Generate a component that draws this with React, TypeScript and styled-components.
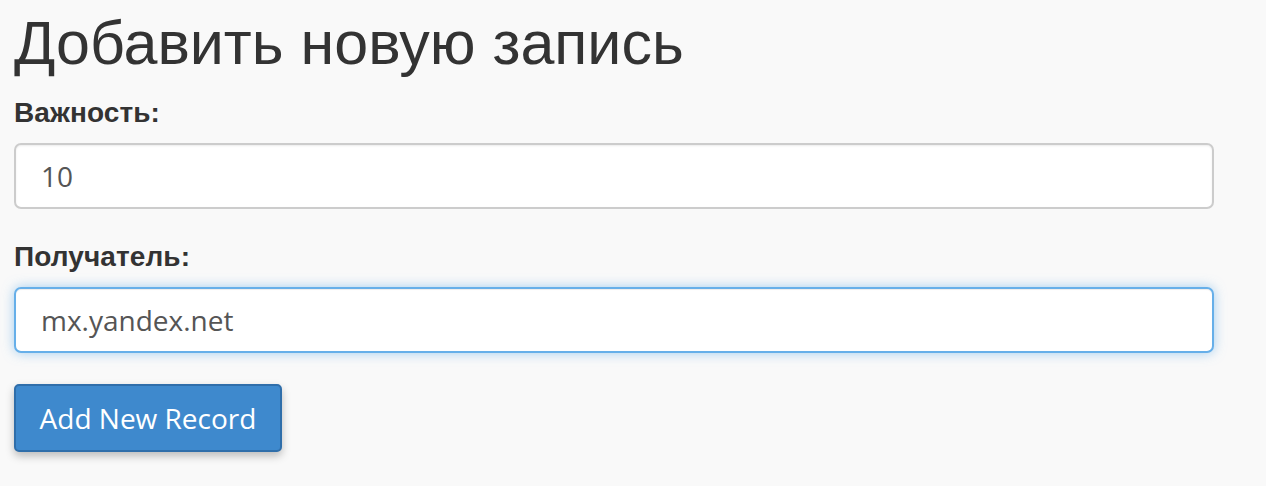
import React from "react";
import styled, { createGlobalStyle } from "styled-components";

const Global = createGlobalStyle`
  html, body { margin: 0; padding: 0; background: #f9f9f9; }
  body { font-family: "Open Sans", "Liberation Sans", sans-serif; color: #333; min-height: 486px; }
`;

const Page = styled.div`
  padding: 3px 52px 30px 14px;
  display: flex;
  flex-direction: column;
`;

const Title = styled.h1`
  margin: 0 0 15px 0;
  font-family: "Liberation Sans", Arial, sans-serif;
  font-weight: 400;
  font-size: 61px;
  line-height: 80px;
  color: #333;
`;

const Group = styled.div`
  display: flex;
  flex-direction: column;
  margin-bottom: 33px;
`;

const Label = styled.label`
  font-family: "Liberation Sans", Arial, sans-serif;
  font-weight: 700;
  font-size: 28px;
  line-height: 30px;
  letter-spacing: 0.1px;
  color: #333;
  margin: 0 0 15px 0;
`;

const Input = styled.input<{ $focused?: boolean }>`
  box-sizing: border-box;
  width: 100%;
  height: 66px;
  padding: 0 25px;
  font-family: "Open Sans", sans-serif;
  font-size: 28px;
  color: #555;
  background: #fff;
  border: 2px solid ${(p) => (p.$focused ? "#66afe9" : "#cccccc")};
  border-radius: 7px;
  outline: none;
  box-shadow: ${(p) =>
    p.$focused
      ? "inset 0 1px 1px rgba(0,0,0,.075), 0 0 12px rgba(102,175,233,.6)"
      : "inset 0 1px 2px rgba(0,0,0,.075)"};
`;

const Button = styled.button`
  align-self: flex-start;
  box-sizing: border-box;
  width: 268px;
  height: 68px;
  margin-top: -2px;
  font-family: "Open Sans", sans-serif;
  font-size: 28px;
  color: #fff;
  background: #3e89cd;
  border: 2px solid #2f6eaa;
  border-radius: 5px;
  box-shadow: 0 4px 9px rgba(0,0,0,.25);
  cursor: pointer;
`;

export default function App() {
  return (
    <>
      <Global />
      <Page>
        <Title>Добавить новую запись</Title>
        <Group>
          <Label>Важность:</Label>
          <Input defaultValue="10" />
        </Group>
        <Group>
          <Label>Получатель:</Label>
          <Input $focused defaultValue="mx.yandex.net" />
        </Group>
        <Button>Add New Record</Button>
      </Page>
    </>
  );
}
